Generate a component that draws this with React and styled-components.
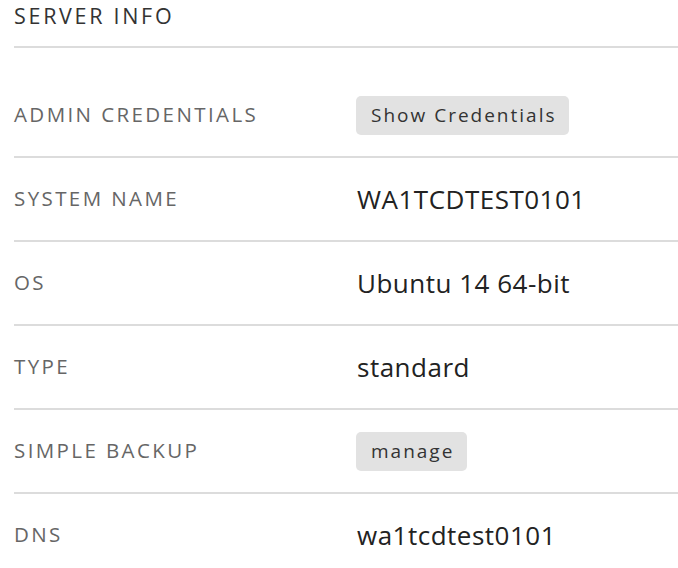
import React from 'react'
import styled, { createGlobalStyle } from 'styled-components'

const Global = createGlobalStyle`
    body {
        margin: 0;
        background: #fff;
        font-family: "Open Sans", "Liberation Sans", sans-serif;
    }
`

const Container = styled.div`
    padding-left: 14px;
`

const Header = styled.h2`
    margin: 0;
    font-size: 21.5px;
    font-weight: 400;
    line-height: 32px;
    letter-spacing: 2.7px;
    color: #333;
    padding-bottom: 14px;
    border-bottom: 2px solid #dcdcdc;
`

const List = styled.div`
    padding-top: 26px;
`

const Row = styled.div`
    display: flex;
    align-items: center;
    height: 82px;
    border-bottom: ${({ $last }) => ($last ? 'none' : '2px solid #dcdcdc')};
`

const Label = styled.div`
    width: 343px;
    flex-shrink: 0;
    font-size: 20.5px;
    letter-spacing: 2.4px;
    color: #666;
    margin-top: -3px;
`

const Value = styled.div`
    font-size: 26px;
    letter-spacing: 0.5px;
    color: #222;
`

const Btn = styled.button`
    border: none;
    background-color: #e2e2e2;
    color: #333;
    border-radius: 5px;
    height: 39px;
    padding: 0 13px 0 15px;
    font-family: inherit;
    font-size: 19px;
    letter-spacing: 2px;
    margin-left: -1px;
`

const rows = [
    { label: 'ADMIN CREDENTIALS', button: 'Show Credentials' },
    { label: 'SYSTEM NAME', value: 'WA1TCDTEST0101' },
    { label: 'OS', value: 'Ubuntu 14 64-bit' },
    { label: 'TYPE', value: 'standard' },
    { label: 'SIMPLE BACKUP', button: 'manage' },
    { label: 'DNS', value: 'wa1tcdtest0101' },
]

function App() {
  return (
    <Container>
        <Global />
        <Header>SERVER INFO</Header>
        <List>
            {rows.map((r, i) => (
                <Row key={r.label} $last={i === rows.length - 1}>
                    <Label>{r.label}</Label>
                    {r.button ? <Btn>{r.button}</Btn> : <Value>{r.value}</Value>}
                </Row>
            ))}
        </List>
    </Container>
  )
}

export default App
